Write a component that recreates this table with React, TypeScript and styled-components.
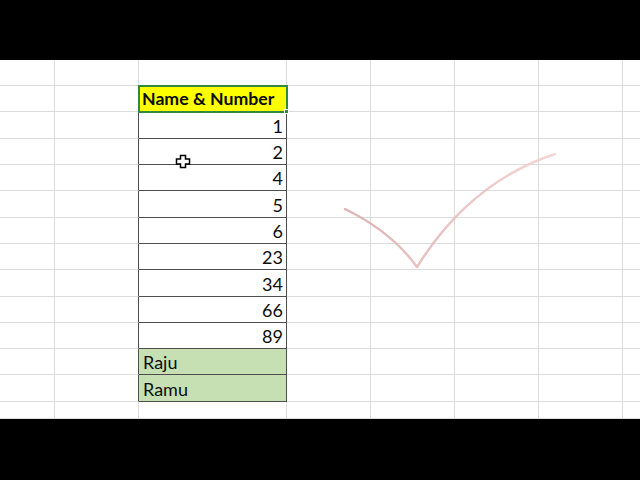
import React from "react";
import styled, { createGlobalStyle, css } from "styled-components";

const Global = createGlobalStyle`
  html, body { margin: 0; padding: 0; background: #000; }
  body { font-family: Lato, "Open Sans", sans-serif; }
`;

const Frame = styled.div`
  width: 640px;
  height: 480px;
  display: flex;
  flex-direction: column;
  background: #000;
  overflow: hidden;
`;

const Letterbox = styled.div<{ $h: number }>`
  height: ${(p) => p.$h}px;
  flex: none;
  background: #000;
`;

const SheetArea = styled.div`
  position: relative;
  height: 359px;
  flex: none;
  background: #fff;
  overflow: hidden;
`;

const Grid = styled.div`
  display: grid;
  grid-template-columns: 55px 84px 148px 84px 84px 84px 84px 40px;
  grid-template-rows: 26px 26px 27px 26px 26px 27px 26px 26px 27px 26px 26px 26px 27px 17px;
  width: 663px;
`;

type Variant = "plain" | "header" | "number" | "name";

const Cell = styled.div<{ $variant: Variant; $edge?: boolean }>`
  box-sizing: border-box;
  border-right: 1px solid ${(p) => (p.$edge ? "#4d4d4d" : "#dcdcdc")};
  border-bottom: 1px solid #dcdcdc;
  display: flex;
  align-items: flex-end;
  font-size: 18px;
  line-height: 1;
  color: #0d0d0d;
  padding: 0 4px 3px 4px;
  white-space: nowrap;
  ${(p) =>
    p.$variant !== "plain" &&
    css`
      border-right-color: #4d4d4d;
      border-bottom-color: #4d4d4d;
    `}
  ${(p) =>
    p.$variant === "header" &&
    css`
      position: relative;
      z-index: 1;
      background: #ffff00;
      font-weight: 700;
      font-size: 17.7px;
      padding-left: 3px;
      outline: 2px solid #2f8a3e;
      outline-offset: -1px;
      &::after {
        content: "";
        position: absolute;
        right: -3px;
        bottom: -3px;
        width: 5px;
        height: 5px;
        background: #2f8a3e;
        border: 1px solid #fff;
        box-sizing: border-box;
      }
    `}
  ${(p) =>
    p.$variant === "number" &&
    css`
      justify-content: flex-end;
      padding-right: 3px;
    `}
  ${(p) =>
    p.$variant === "name" &&
    css`
      background: #c6e0b4;
    `}
`;

const Overlay = styled.svg`
  position: absolute;
  left: 0;
  top: 0;
  pointer-events: none;
`;

const tableRows: { v: Variant; text: string }[] = [
  { v: "header", text: "Name & Number" },
  ...["1", "2", "4", "5", "6", "23", "34", "66", "89"].map((t) => ({ v: "number" as Variant, text: t })),
  { v: "name", text: "Raju" },
  { v: "name", text: "Ramu" },
];

const ROWS = 14;
const COLS = 8;
const TABLE_COL = 2;
const TABLE_START = 1;

export default function App() {
  const cells: React.ReactNode[] = [];
  for (let r = 0; r < ROWS; r++) {
    const ti = r - TABLE_START;
    const inTable = ti >= 0 && ti < tableRows.length;
    for (let c = 0; c < COLS; c++) {
      if (c === TABLE_COL && inTable) {
        const row = tableRows[ti];
        cells.push(
          <Cell key={`${r}-${c}`} $variant={row.v}>
            {row.text}
          </Cell>
        );
      } else {
        cells.push(<Cell key={`${r}-${c}`} $variant="plain" $edge={c === TABLE_COL - 1 && inTable} />);
      }
    }
  }
  return (
    <>
      <Global />
      <Frame>
        <Letterbox $h={60} />
        <SheetArea>
          <Grid>{cells}</Grid>
          <Overlay width="640" height="359" viewBox="0 0 640 359">
            <defs>
              <linearGradient id="tick" x1="345" y1="0" x2="555" y2="0" gradientUnits="userSpaceOnUse">
                <stop offset="0" stopColor="#d9a5a5" />
                <stop offset="0.35" stopColor="#e2b4b4" />
                <stop offset="1" stopColor="#f3cfcf" />
              </linearGradient>
            </defs>
            <path
              d="M345 149 Q392 172 417 207 Q470 122 555 94"
              fill="none"
              stroke="url(#tick)"
              strokeWidth="2.4"
              strokeLinecap="round"
              strokeLinejoin="round"
              opacity="0.85"
            />
            <path
              d="M180.5 95.5 h5 v3.5 h4 v5 h-4 v3.5 h-5 v-3.5 h-4 v-5 h4 z"
              fill="#fff"
              stroke="#000"
              strokeWidth="1.5"
              strokeLinejoin="miter"
            />
          </Overlay>
        </SheetArea>
        <Letterbox $h={61} />
      </Frame>
    </>
  );
}
